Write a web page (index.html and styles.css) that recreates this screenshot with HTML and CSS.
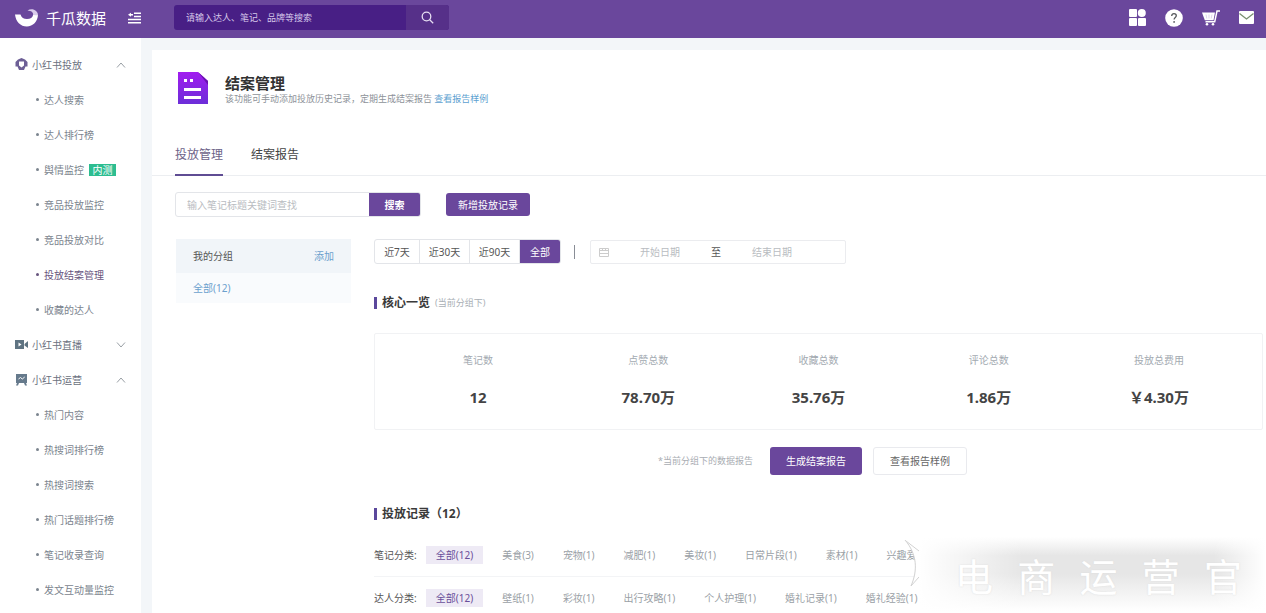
FILE: index.html
```html
<!DOCTYPE html>
<html lang="zh-CN">
<head>
<meta charset="utf-8">
<meta name="viewport" content="width=device-width, initial-scale=1">
<title>千瓜数据 - 结案管理</title>
<link rel="stylesheet" href="styles.css">
</head>
<body>
<header class="topbar">
  <a class="brand" href="#">
    <svg class="brand-mark" viewBox="0 0 24 18" aria-hidden="true"><path d="M0 5.500h5.500c.8 3 3.300 4.500 6.500 4.500 3.400 0 5.800-1.500 6.200-4.500L23 6C22.600 12.500 18 17.500 11.800 17.500 5.600 17.500.8 12.700 0 5.500z" fill="#fff"/><path d="M12.500 1.500C14.500.2 17 0 19 .8c2.600 1 4 3 4 5.700l-4.800-.5c.2-2.600-2-4.300-5.700-4.500z" fill="#d9cbeb"/></svg>
    <span>千瓜数据</span>
  </a>
  <button class="icon-btn fold" type="button" aria-label="收起菜单">
    <svg width="13" height="12" viewBox="0 0 13 12" stroke="#fff" stroke-width="1.500" fill="#fff"><path d="M6 1.200h7M6 4.400h7M0 7.600h13M0 10.800h13M2 2.800h3"/><path d="M0 2.800l3-2v4z" stroke="none"/></svg>
  </button>
  <form class="top-search">
    <input type="text" aria-label="全站搜索" placeholder="请输入达人、笔记、品牌等搜索">
    <button type="button" aria-label="搜索">
      <svg width="13" height="13" viewBox="0 0 13 13" fill="none" stroke="#e6ddf2" stroke-width="1.300"><circle cx="5.500" cy="5.500" r="4.300"/><path d="M8.700 8.700l3.500 3.500"/></svg>
    </button>
  </form>
  <nav class="top-icons" aria-label="快捷入口">
    <a href="#" aria-label="应用"><svg width="17" height="17" viewBox="0 0 17 17" fill="#fff"><rect width="8" height="8" rx="1"/><circle cx="12.800" cy="4" r="4"/><rect y="9" width="8" height="8" rx="1"/><rect x="9" y="9" width="8" height="8" rx="1"/></svg></a>
    <a href="#" aria-label="帮助"><svg width="18" height="18" viewBox="0 0 18 18"><circle cx="9" cy="9" r="8.800" fill="#fff"/><path d="M6.700 7c0-1.500 1-2.400 2.300-2.400s2.300.9 2.300 2.200c0 1.600-2.200 1.800-2.200 3.700" fill="none" stroke="#56595c" stroke-width="1.300"/><circle cx="9.100" cy="12.900" r=".9" fill="#56595c"/></svg></a>
    <a href="#" aria-label="购物车"><svg width="18" height="16" viewBox="0 0 18 16"><path d="M0 2.500h13l-1.500 7.800H2.800z" fill="#fff"/><path d="M18 1h-3l-2.300 10.800H3.500" fill="none" stroke="#fff" stroke-width="1.500"/><path d="M4 4.500l.8 4M7 4.500v4M10 4.500l-.8 4" stroke="#c9b8e0" stroke-width=".6"/><circle cx="5" cy="14.200" r="1.300" fill="#fff"/><circle cx="11" cy="14.200" r="1.300" fill="#fff"/></svg></a>
    <a href="#" aria-label="消息"><svg width="15" height="13" viewBox="0 0 15 13"><rect width="15" height="13" rx="1" fill="#fff"/><path d="M.5 2.500l7 5.500 7-5.500" fill="none" stroke="#788f70" stroke-width="1.300"/></svg></a>
  </nav>
</header>

<div class="shell">
  <nav class="sidebar" aria-label="主菜单">
    <button class="group" type="button">
      <svg width="13" height="13" viewBox="0 0 13 13"><path d="M3 1.500L6.500 0 10 1.500 12.500 4v4.500h-2L9 12H4L2.500 8.500h-2V4z" fill="#6d5f96"/><path d="M4 3.500h5v4L6.500 9.500 4 7.500z" fill="#fff"/></svg>
      <span>小红书投放</span><svg class="chev" width="10" height="6" viewBox="0 0 10 6"><path d="M1 5.500l4-4.500 4 4.500"/></svg>
    </button>
    <a href="#">达人搜索</a>
    <a href="#">达人排行榜</a>
    <a href="#">舆情监控<em class="badge">内测</em></a>
    <a href="#">竞品投放监控</a>
    <a href="#">竞品投放对比</a>
    <a class="current" href="#">投放结案管理</a>
    <a href="#">收藏的达人</a>
    <button class="group" type="button">
      <svg width="13" height="13" viewBox="0 0 13 13"><path d="M0 2h9v9H0zM9.500 6L13 3v7L9.500 7.500z" fill="#5f7482"/><path d="M3.500 4.500v4l3-2z" fill="#fff"/></svg>
      <span>小红书直播</span><svg class="chev" width="10" height="6" viewBox="0 0 10 6"><path d="M1 .5L5 5 9 .5"/></svg>
    </button>
    <button class="group" type="button">
      <svg width="13" height="13" viewBox="0 0 13 13"><path d="M1 1h11v9h-1l1 2.500h-2L9 10H4l-1 2.500H1L2 10H1z" fill="#667a8c"/><path d="M3.500 6l2-1.500 1.800 1.500 2.400-2" fill="none" stroke="#fff"/></svg>
      <span>小红书运营</span><svg class="chev" width="10" height="6" viewBox="0 0 10 6"><path d="M1 5.500l4-4.500 4 4.500"/></svg>
    </button>
    <a href="#">热门内容</a>
    <a href="#">热搜词排行榜</a>
    <a href="#">热搜词搜索</a>
    <a href="#">热门话题排行榜</a>
    <a href="#">笔记收录查询</a>
    <a href="#">发文互动量监控</a>
  </nav>

  <main class="panel">
    <div class="page-head">
      <svg width="30" height="32" viewBox="0 0 30 32" aria-hidden="true"><defs><linearGradient id="doc" x2="0" y2="1"><stop stop-color="#a21cf0"/><stop offset="1" stop-color="#6c2ed8"/></linearGradient></defs><path d="M0 0h20l10 9v23H0z" fill="url(#doc)"/><path d="M20 0l10 9v4z" fill="#6a12b0"/><path d="M6 7h3v3H6zM12 7h3v3h-3zM6 16h17v3H6zM6 24h17v3H6z" fill="#fff"/></svg>
      <div>
        <h1>结案管理</h1>
        <p>该功能可手动添加投放历史记录，定期生成结案报告 <a href="#">查看报告样例</a></p>
      </div>
    </div>
    <nav class="tabs"><a class="active" href="#">投放管理</a><a href="#">结案报告</a></nav>

    <div class="toolbar">
      <form class="note-search">
        <input type="text" aria-label="笔记标题关键词" placeholder="输入笔记标题关键词查找">
        <button type="button">搜索</button>
      </form>
      <button class="btn add" type="button">新增投放记录</button>
    </div>

    <div class="columns">
      <aside class="groups">
        <div class="groups-head"><span>我的分组</span><a href="#">添加</a></div>
        <a class="groups-item" href="#">全部(12)</a>
      </aside>

      <div class="content">
        <div class="range">
          <div class="segments">
            <button type="button">近7天</button><button type="button">近30天</button><button type="button">近90天</button><button class="on" type="button">全部</button>
          </div>
          <span class="divider"></span>
          <div class="dates">
            <svg width="10" height="10" viewBox="0 0 10 10" fill="none" stroke="#ccc"><path d="M.5 1.500h9v8h-9zM.5 3.500h9M.5 6.500h9M3.500 1.500v2M6.500 1.500v2"/></svg>
            <input type="text" aria-label="开始日期" placeholder="开始日期"><span>至</span><input type="text" aria-label="结束日期" placeholder="结束日期">
          </div>
        </div>

        <h2>核心一览<small>(当前分组下)</small></h2>
        <dl class="stats">
          <div><dt>笔记数</dt><dd>12</dd></div>
          <div><dt>点赞总数</dt><dd>78.70万</dd></div>
          <div><dt>收藏总数</dt><dd>35.76万</dd></div>
          <div><dt>评论总数</dt><dd>1.86万</dd></div>
          <div><dt>投放总费用</dt><dd>￥4.30万</dd></div>
        </dl>

        <div class="actions">
          <span>*当前分组下的数据报告</span>
          <button class="btn" type="button">生成结案报告</button>
          <button class="btn plain" type="button">查看报告样例</button>
        </div>

        <h2>投放记录（12）</h2>
        <div class="filters">
          <div class="filter"><span>笔记分类:</span><a class="on" href="#">全部(12)</a><a href="#">美食(3)</a><a href="#">宠物(1)</a><a href="#">减肥(1)</a><a href="#">美妆(1)</a><a href="#">日常片段(1)</a><a href="#">素材(1)</a><a href="#">兴趣爱好(1)</a></div>
          <div class="filter"><span>达人分类:</span><a class="on" href="#">全部(12)</a><a href="#">壁纸(1)</a><a href="#">彩妆(1)</a><a href="#">出行攻略(1)</a><a href="#">个人护理(1)</a><a href="#">婚礼记录(1)</a><a href="#">婚礼经验(1)</a></div>
        </div>
      </div>
    </div>
  </main>

  <div class="watermark">
    <svg width="16" height="74" viewBox="0 0 16 74" aria-hidden="true"><path d="M2 3l14 10v34l-7 2c6-16 5-32-7-46z" fill="#fff"/><path d="M2 3c12 14 13 30 6 46l8-9M3 4l13 10" fill="none" stroke="#d2d2d2"/></svg>
    <div class="watermark-text"><span>电</span><span>商</span><span>运</span><span>营</span><span>官</span></div>
  </div>
</div>
</body>
</html>
```
FILE: styles.css
```css
* { box-sizing: border-box; }

body {
  margin: 0;
  min-height: 100vh;
  display: flex;
  flex-direction: column;
  background: #f3f6f9;
  color: #555;
  font: 10px/16px "Noto Sans", "Noto Sans CJK SC", sans-serif;
}

a { color: inherit; text-decoration: none; }
button, input { font: inherit; color: inherit; border: 0; padding: 0; margin: 0; background: none; min-width: 0; }
button { cursor: pointer; }
input:focus { outline: none; }
h1, h2, p, dl, dd { margin: 0; }
svg { flex: none; display: block; }

/* top bar */
.topbar {
  display: flex;
  align-items: center;
  height: 38px;
  padding: 0 12px 3px 15px;
  background: #6a479c;
  color: #fff;
}
.brand { display: flex; align-items: center; gap: 7px; font-size: 15px; }
.brand-mark { width: 24px; height: 18px; }
.fold { margin-left: 22px; }
.top-search { display: flex; height: 25px; margin-left: 33px; width: 275px; border-radius: 3px; overflow: hidden; background: #481f85; }
.top-search input { flex: 1; padding: 0 12px; font-size: 9px; }
.top-search input::placeholder { color: #d6c8ea; opacity: 1; }
.top-search button { width: 43px; display: grid; place-items: center; background: #563089; }
.top-icons { display: flex; align-items: center; gap: 19px; margin-left: auto; }

/* side menu */
.shell { position: relative; flex: 1; display: flex; gap: 11px; }
.sidebar { width: 141px; flex: none; padding-top: 9px; background: #fff; color: #7b848e; }
.sidebar > * { display: flex; align-items: center; width: 100%; height: 35px; }
.sidebar a { padding-left: 36px; }
.sidebar a::before { content: ""; width: 3px; height: 3px; margin-right: 5px; border-radius: 50%; background: currentColor; }
.sidebar .current { color: #67547d; }
.group { padding: 0 15px; gap: 4px; color: #6b7180; }
.chev { margin-left: auto; fill: none; stroke: #999fa5; }
.badge { margin-left: 5px; width: 27px; line-height: 12px; text-align: center; font-style: normal; background: #2dbd90; color: #fff; }

/* page head */
.panel { flex: 1; min-width: 0; margin-top: 12px; background: #fff; }
.page-head { display: flex; gap: 17px; padding: 22px 26px 0; }
.page-head h1 { font-size: 15px; line-height: 22px; color: #333; }
.page-head p { font-size: 9px; line-height: 10px; color: #8d9299; }
.page-head p a { color: #5d9fd0; }
.tabs { display: flex; gap: 28px; margin-top: 30px; padding: 0 23px; border-bottom: 1px solid #eceef1; font-size: 12px; line-height: 20px; color: #444; }
.tabs a { padding: 11px 0 9px; margin-bottom: -1px; border-bottom: 2px solid transparent; }
.tabs .active { color: #6d6388; border-color: #5f4c93; }

/* toolbar */
.btn { height: 28px; padding: 0 16px; border-radius: 3px; background: #6a479c; color: #fff; }
.btn.plain { background: #fff; color: #666; border: 1px solid #e9eaee; }
.toolbar { display: flex; align-items: center; gap: 25px; padding: 16px 23px 0; }
.note-search { display: flex; width: 246px; height: 25px; border: 1px solid #e3e5e9; border-radius: 3px; overflow: hidden; }
.note-search input { flex: 1; padding: 0 11px; }
.note-search button { width: 51px; background: #6a479c; color: #fff; font-weight: bold; }
.btn.add { width: 84px; height: 23px; padding: 0; }
::placeholder { color: #b9bcc1; opacity: 1; }

.columns { display: flex; align-items: flex-start; gap: 23px; padding: 22px 3px 0 24px; }
.groups { width: 175px; flex: none; }
.groups-head, .groups-item { display: flex; align-items: center; padding: 0 17px; }
.groups-head { justify-content: space-between; height: 34px; background: #f1f5f9; }
.groups-item { height: 30px; background: #f9fbfd; color: #6ba0cd; }
.groups-head a { color: #6ba0cd; }
.content { flex: 1; min-width: 0; }

/* date range */
.range { display: flex; align-items: center; height: 25px; }
.segments { display: flex; border: 1px solid #e3e5e9; border-radius: 3px; overflow: hidden; }
.segments button { height: 23px; width: 50px; border-right: 1px solid #e3e5e9; }
.segments button:first-child { width: 45px; }
.segments .on { width: 40px; border: 0; background: #6a479c; color: #fff; }
.divider { width: 1px; height: 14px; margin: 0 15px 0 13px; background: #898d96; }
.dates { display: flex; align-items: center; width: 256px; height: 24px; padding: 0 22px 0 8px; border: 1px solid #ebecef; border-radius: 2px; }
.dates input { flex: 1; text-align: center; }

/* sections */
h2 { display: flex; align-items: center; gap: 5px; font-size: 12px; line-height: 20px; color: #3a3a3a; }
h2::before { content: ""; width: 3px; height: 12px; background: #5b489c; }
h2 small { font-size: 9px; font-weight: normal; color: #a9afb5; }
.range + h2 { margin-top: 29px; }
.stats { display: flex; margin-top: 20px; padding: 16px 18px 20px; border: 1px solid #f1f2f4; border-radius: 2px; text-align: center; }
.stats div { flex: 1; }
.stats dt { line-height: 20px; color: #a3aab1; }
.stats dd { margin-top: 15px; font-size: 15px; line-height: 24px; font-weight: bold; color: #444; }
.actions { display: flex; align-items: center; justify-content: center; gap: 11px; margin: 17px 0 29px; padding-right: 12px; }
.actions span { margin-right: 6px; font-size: 9px; color: #a9adb3; }

.filters { margin-top: 9px; }
.filter { display: flex; align-items: center; gap: 9px; height: 43px; white-space: nowrap; overflow: hidden; color: #9a9fa6; }
.filter + .filter { border-top: 1px solid #f3f4f6; }
.filter span { color: #555; }
.filter a { padding: 0 10px; line-height: 18px; }
.filter .on { background: #eeeaf5; color: #6a4f9a; }

/* watermark laid over the records */
.watermark { position: absolute; right: 0; top: 499px; display: flex; width: 363px; height: 74px; }
.watermark-text {
  flex: 1;
  display: flex;
  align-items: center;
  justify-content: space-between;
  padding: 4px 24px 0 36px;
  background: linear-gradient(90deg, #fff, rgba(255, 255, 255, 0) 30%, rgba(255, 255, 255, 0) 85%, #fff), linear-gradient(#fff, #e6e6e6 25%, #e6e6e6 50%, #fff);
  color: #fff;
  font-size: 38px;
  font-weight: 400;
  line-height: 60px;
  text-shadow: 0 0 2px #dcdcdc;
}
```
